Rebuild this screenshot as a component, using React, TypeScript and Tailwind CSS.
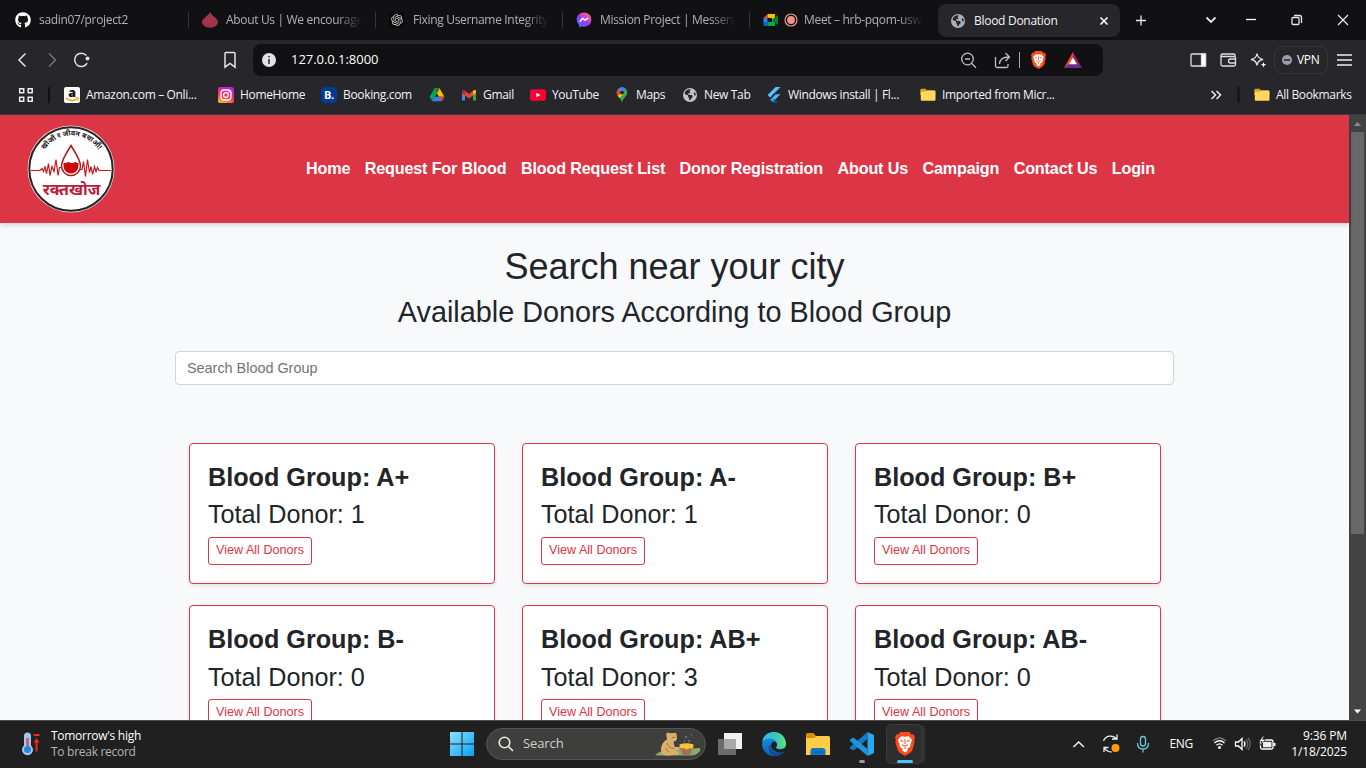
import React from "react";
import { FaGithub, FaEarthAmericas } from "react-icons/fa6";
import { RiOpenaiFill } from "react-icons/ri";

type IconProps = { className?: string };

const tabs = [
  { title: "sadin07/project2", icon: "github" },
  { title: "About Us | We encourage", icon: "drop" },
  { title: "Fixing Username IntegrityE", icon: "openai" },
  { title: "Mission Project | Messeng", icon: "messenger" },
  { title: "Meet – hrb-pqom-usw", icon: "meet" },
];

const groups = [
  { name: "A+", total: 1 },
  { name: "A-", total: 1 },
  { name: "B+", total: 0 },
  { name: "B-", total: 0 },
  { name: "AB+", total: 3 },
  { name: "AB-", total: 0 },
];

const links = ["Home", "Request For Blood", "Blood Request List", "Donor Registration", "About Us", "Campaign", "Contact Us", "Login"];

function Drop() {
  return (
    <svg viewBox="0 0 16 16" className="size-4">
      <path d="M8 0C6 4 0 6.500 0 10c0 3 3.500 5.700 8 5.700s8-2.700 8-5.700C16 6.500 10 4 8 0Z" fill="#9d3648" />
    </svg>
  );
}

function Messenger() {
  return (
    <svg viewBox="0 0 16 16" className="size-4">
      <defs>
        <linearGradient id="msg" x1="0" y1="1" x2=".8" y2="0">
          <stop offset="0" stopColor="#168aff" />
          <stop offset=".5" stopColor="#a033ff" />
          <stop offset="1" stopColor="#ff6b6b" />
        </linearGradient>
      </defs>
      <path d="M8 .5C3.700.5.7 3.600.7 7.600c0 2.200.9 4 2.400 5.300l.1 2.500 2.200-1c.8.200 1.700.400 2.600.400 4.300 0 7.300-3.100 7.300-7.200S12.300.5 8 .5Z" fill="url(#msg)" />
      <path d="m3.800 9.700 2.800-3.400 2.500 1.900 3.200-2.200" fill="none" stroke="#fff" strokeWidth="1.500" strokeLinejoin="round" />
    </svg>
  );
}

function Meet() {
  return (
    <svg viewBox="0 0 16 16" className="size-4">
      <path d="M4.500 2v4H.5z" fill="#e94235" />
      <path d="M4.500 2h7.500v3.500L9 8V6H4.500z" fill="#fbbc04" />
      <path d="M.5 6h4v4h-4z" fill="#2684fc" />
      <path d="M.5 10h4v4H2Q.5 14 .5 12.500z" fill="#0066da" />
      <path d="M4.500 10H9V8l3 2.500V14H4.500z" fill="#00ac47" />
      <path d="M9 8l6-5v10z" fill="#00832d" />
    </svg>
  );
}

function BraveLion({ className }: IconProps) {
  return (
    <svg viewBox="0 0 20 24" className={className}>
      <path d="m5.500 0h9l2 2.400 2-.2L20 5.500 19 8l.7 2-2.500 8.500-1.500 2L10 24l-5.700-3.500-1.500-2L.3 10 1 8 0 5.500l1.500-3.300 2 .2z" fill="#fb4a1c" />
      <path d="m6.300 4.200 3.700.6 3.700-.6 3.300 3.600-1.200 3.700L15 15l-2.600 1.800.4 1.700L10 20.500l-2.800-2 .4-1.700L5 15l-.8-3.500L3 7.800z" fill="#fff" />
      <path d="m5.300 8.500 3 .9M14.700 8.500l-3 .9M10 7v5M7 12.700l3 1.300 3-1.300M10 14.500V17" fill="none" stroke="#fb4a1c" strokeWidth="1" />
    </svg>
  );
}

function Folder() {
  return (
    <svg viewBox="0 0 16 16" className="size-4">
      <path d="M.3 3q0-1.200 1.200-1.200h4L7 3.500h7q1.200 0 1.200 1.200V8H.3z" fill="#d99e1c" />
      <path d="M.8 4.500H6L7.300 3.400H14.500q1 0 1 1V12.800q0 1-1 1H1.800q-1 0-1-1z" fill="#ffd75e" />
    </svg>
  );
}

function Insta() {
  return (
    <svg viewBox="0 0 16 16" className="size-4">
      <defs>
        <linearGradient id="ig" x1=".2" y1="1" x2=".6" y2="0">
          <stop offset="0" stopColor="#ffb52b" />
          <stop offset=".45" stopColor="#ff2f5e" />
          <stop offset="1" stopColor="#b520ea" />
        </linearGradient>
      </defs>
      <rect width="16" height="16" rx="2" fill="url(#ig)" />
      <rect x="3" y="3" width="10" height="10" rx="3" fill="none" stroke="#fff" strokeWidth="1.300" />
      <circle cx="8" cy="8" r="2.400" fill="none" stroke="#fff" strokeWidth="1.300" />
      <circle cx="11" cy="5" r=".8" fill="#fff" />
    </svg>
  );
}

function Drive() {
  return (
    <svg viewBox="0 0 16 16" className="size-4">
      <path d="M5.300 1.500 8 6.200 3.300 14.300.6 9.700z" fill="#00a94b" />
      <path d="M5.300 1.500h5.400l4.700 8.200H10z" fill="#ffbd00" />
      <path d="M5.900 9.700h9.500l-2.700 4.600H3.300z" fill="#3e7de9" />
      <path d="M5.300 1.500h5.400L8 6.200z" fill="#15803d" />
      <path d="m15.400 9.700-2.700 4.600L10 9.700z" fill="#ea4335" />
    </svg>
  );
}

function Gmail() {
  return (
    <svg viewBox="0 0 16 16" className="size-4">
      <path d="M1 4v9.500h3V6z" fill="#4285f4" />
      <path d="M15 4v9.500h-3V6z" fill="#34a853" />
      <path d="M1 4.500Q1 2.500 3 3l5 3.900L13 3q2-.5 2 1.500v1.800L8 11.500 1 6.300z" fill="#ea4335" />
      <path d="M12 4v4.100l3-2.200V4.500C15 2.400 13 2.800 12 4z" fill="#fbbc04" />
      <path d="M4 4v4.100L1 5.900V4.500C1 2.400 3 2.800 4 4z" fill="#c5221f" />
    </svg>
  );
}

function YouTube() {
  return (
    <svg viewBox="0 0 16 16" className="size-4">
      <rect y="2.300" width="16" height="11.400" rx="2.500" fill="#ff0033" />
      <path d="m6.300 5.700 4.200 2.300-4.200 2.300z" fill="#fff" />
    </svg>
  );
}

function MapsPin() {
  return (
    <svg viewBox="0 0 16 16" className="size-4">
      <path d="M8 .3A5.300 5.300 0 0 0 2.700 5.600C2.700 9.500 7 10.500 8 15.700 9 10.500 13.300 9.500 13.300 5.600A5.300 5.300 0 0 0 8 .3" fill="#34a853" />
      <path d="M8 .3A5.300 5.300 0 0 0 4 2.200L8 5.600 11.500 1.600A5.300 5.300 0 0 0 8 .3" fill="#4285f4" />
      <path d="M4 2.200A5.300 5.300 0 0 0 3.800 8.900L8 5.600z" fill="#ea4335" />
      <path d="M3.700 8.800 8 5.600l1.500 1.800L5.300 11z" fill="#fbbc04" />
      <circle cx="8" cy="5.600" r="1.900" fill="#26262b" />
    </svg>
  );
}

function TabIcon({ name }: { name: string }) {
  if (name === "github") return <FaGithub className="size-4 text-white" />;
  if (name === "drop") return <Drop />;
  if (name === "openai")
    return (
      <span className="flex size-4 shrink-0 items-center justify-center rounded-sm bg-[#0a0a0a]">
        <RiOpenaiFill className="size-[14px] text-[#d0d0d0]" />
      </span>
    );
  if (name === "messenger") return <Messenger />;
  return (
    <span className="flex shrink-0 gap-1">
      <Meet />
      <svg viewBox="0 0 16 16" className="size-4">
        <circle cx="8" cy="8" r="6" fill="none" stroke="#ee938b" strokeWidth="1.200" />
        <circle cx="8" cy="8" r="3.900" fill="#ee938b" />
      </svg>
    </span>
  );
}

function TabBar() {
  return (
    <div className="flex h-10 pl-px text-[12px] text-[#b1b1b4]">
      {tabs.map((t, i) => (
        <div key={t.title} className="flex h-10 w-[187px] shrink-0 items-center">
          <div className="ml-[14px] flex w-[160px] shrink-0 items-center gap-2 whitespace-nowrap [&>svg]:shrink-0 [mask-image:linear-gradient(to_right,#000_84%,transparent)]">
            <TabIcon name={t.icon} />
            <span className={i === 4 ? "-ml-[3px] tracking-[-0.32px]" : "tracking-[-0.33px]"}>{t.title}</span>
          </div>
          {i < 4 && <div className="ml-[13px] h-4 w-px shrink-0 bg-[#37373a]" />}
        </div>
      ))}
      <div className="ml-[2px] mt-1 flex h-[33px] w-[182px] shrink-0 items-center rounded-lg bg-[#26262b] pl-[13px] pr-[11px] text-[#f4f4f5]">
        <FaEarthAmericas className="size-[14px] text-[#aaafb5]" />
        <span className="ml-[9px] tracking-[-0.28px]">Blood Donation</span>
        <svg viewBox="0 0 10 10" className="ml-auto size-[10px]"><path d="m1.500 1.500 7 7m0-7-7 7" stroke="#fff" strokeWidth="1.600" /></svg>
      </div>
      <svg viewBox="0 0 246 40" className="h-10 w-[246px]" fill="none" stroke="#e8e8e8" strokeWidth="1.300">
        <path d="M16 20.500h10M21 15.500v10" />
        <path d="m86.500 17.500 4.500 4.500 4.500-4.500" strokeWidth="1.800" />
        <path d="M126 19.500h10" stroke="#fff" />
        <rect x="172" y="17.500" width="7" height="7" rx="1" />
        <path d="M174 15.500h5.500q2 0 2 2V23" />
        <path d="m218 15 10 10m0-10-10 10" />
      </svg>
    </div>
  );
}

function AddressBar() {
  return (
    <div className="flex h-10 items-center bg-[#26262b] text-[12px] text-white">
      <svg viewBox="0 0 253 40" className="h-10 w-[253px] shrink-0" fill="none" stroke="#e4e4e6" strokeWidth="1.500">
        <path d="m25.500 13.500-6.500 6.500 6.500 6.500" />
        <path d="m49 13.500 6.500 6.500-6.500 6.500" stroke="#77777b" />
        <path d="M87.200 23.200a6.700 6.700 0 1 1-.8-7.800" />
        <circle cx="87.500" cy="18.500" r="2" fill="#e4e4e6" stroke="none" />
        <path d="M225 13.500q0-1 1-1h8q1 0 1 1v13.700l-5-3.700-5 3.700z" />
      </svg>
      <div className="flex h-8 w-[850px] shrink-0 items-center rounded-lg bg-[#111113] pl-[9px]">
        <svg viewBox="0 0 14 14" className="size-[14px]">
          <circle cx="7" cy="7" r="7" fill="#e2e2e4" />
          <path d="M6.200 3h1.600v1.600H6.200zM6.200 6h1.600v5H6.200z" fill="#333" />
        </svg>
        <span className="ml-[15px] text-[13px] tracking-[-0.04px]">127.0.0.1:8000</span>
        <svg viewBox="0 0 60 32" className="ml-auto h-8 w-[60px]" fill="none" stroke="#bfbfc2" strokeWidth="1.300">
          <circle cx="8.500" cy="15" r="5.800" />
          <path d="m12.500 19.300 4.500 4.500M6 15h5" />
          <path d="M36.500 13v9q0 1.500 1.500 1.500h9.500q1.500 0 1.500-1.500v-2" />
          <path d="M40.500 20q.5-7 9-7M46.500 9l4 4-4 4" />
        </svg>
        <div className="h-4 w-px bg-[#aaa]" />
        <BraveLion className="ml-[10px] h-[18px] w-[17px]" />
        <svg viewBox="0 0 18 16" className="ml-[17px] mr-[21px] h-4 w-[18px]">
          <path d="M9 0 0 16l9-6z" fill="#ff4724" />
          <path d="m9 0 9 16-9-6z" fill="#9e1f63" />
          <path d="M0 16h18l-5-4H5z" fill="#662d91" />
          <path d="m9 5.500 4 6.800H5z" fill="#fff" />
        </svg>
      </div>
      <svg viewBox="0 0 172 40" className="h-10 w-[172px] shrink-0" fill="none" stroke="#e0e0e2" strokeWidth="1.300">
        <rect x="88" y="14" width="14.500" height="12" rx="1" />
        <path d="M98.500 14h4v12h-4z" fill="#fff" />
        <path d="M132 16.500V15q0-1-1-1h-11.500q-1.500 0-1.500 1.500v9q0 1.500 1.500 1.500H131q1.500 0 1.500-1.500V18q0-1.500-1.500-1.500H118" />
        <path d="M132.500 19h-5q-2 0-2 2t2 2h5" />
        <path d="M154 13.500q.7 5.300 6 6-5.300.7-6 6-.7-5.300-6-6 5.300-.7 6-6z" />
        <path d="m160.500 22 .8 2 2 .8-2 .8-.8 2-.8-2-2-.8 2-.8z" fill="#fff" stroke="none" />
      </svg>
      <div className="-ml-px flex h-7 w-[54px] shrink-0 items-center gap-[5px] rounded-lg border border-[#35353b] pl-[7px] text-[12px]">
        <svg viewBox="0 0 10 10" className="size-[10px] shrink-0"><circle cx="5" cy="5" r="5" fill="#9a9cb0" /><path d="M2 5h6" stroke="#26262b" strokeWidth="1.500" /></svg>
        <span className="tracking-[-0.3px]">VPN</span>
      </div>
      <svg viewBox="0 0 15 12" className="ml-[9px] h-3 w-[15px]" stroke="#eee" strokeWidth="1.300"><path d="M0 1h15M0 6h15M0 11h15" /></svg>
    </div>
  );
}

function Bookmark({ width, label, children }: { width: string; label?: string; children: React.ReactNode }) {
  return (
    <div className={`flex shrink-0 items-center gap-1.5 whitespace-nowrap tracking-[-0.34px] ${width}`}>
      <span className="flex size-4 shrink-0 items-center justify-center">{children}</span>
      {label}
    </div>
  );
}

function Bookmarks() {
  return (
    <div className="flex h-[35px] items-center border-b border-[#3a3a3e] bg-[#26262b] pb-1 text-[12px] text-[#f3f3f4]">
      <svg viewBox="0 0 64 30" className="h-[30px] w-16 shrink-0" fill="none" stroke="#eee" strokeWidth="1.500">
        <path d="M19.700 8.700h4v4h-4zM28.200 8.700h4v4h-4zM19.700 17.200h4v4h-4zM28.200 17.200h4v4h-4z" />
        <path d="M49 7v16" stroke="#111" strokeWidth="2" />
      </svg>
      <Bookmark width="w-[154px]" label="Amazon.com – Onli...">
        <svg viewBox="0 0 16 16" className="size-4">
          <rect width="16" height="16" rx="2" fill="#fff" />
          <text x="8" y="9.800" textAnchor="middle" fontFamily="Open Sans" fontWeight="800" fontSize="12.500" fill="#111">a</text>
          <path d="M2 11q6 4.500 11 1" fill="none" stroke="#ff9900" strokeWidth="1.500" />
          <path d="M11.500 10.700h3l-.6 3" fill="none" stroke="#ff9900" />
        </svg>
      </Bookmark>
      <Bookmark width="w-[103px]" label="HomeHome"><Insta /></Bookmark>
      <Bookmark width="w-[108px]" label="Booking.com">
        <span className="flex size-4 items-center justify-center rounded-sm bg-[#003b95] text-[11px] font-bold text-white">B.</span>
      </Bookmark>
      <Bookmark width="w-8"><Drive /></Bookmark>
      <Bookmark width="w-[69px]" label="Gmail"><Gmail /></Bookmark>
      <Bookmark width="w-[84px]" label="YouTube"><YouTube /></Bookmark>
      <Bookmark width="w-[68px]" label="Maps"><MapsPin /></Bookmark>
      <Bookmark width="w-[84px]" label="New Tab"><FaEarthAmericas className="size-[14px] text-[#c1c3c6]" /></Bookmark>
      <Bookmark width="w-[154px]" label="Windows install | Fl...">
        <svg viewBox="0 0 16 16" className="size-4">
          <path d="M9.700 0H14.500L4 10.400 1.600 8z" fill="#54c5f8" />
          <path d="M9.700 7.300h4.800L8.900 12.800 6.500 10.400z" fill="#40bdf5" />
          <path d="m4.100 12.700 2.400-2.400 2.400 2.400-2.400 2.400z" fill="#29a6e8" />
          <path d="m6.500 15.100 2.400-2.400 3.200 3.300H7.400z" fill="#01579b" />
        </svg>
      </Bookmark>
      <Bookmark width="w-[154px]" label="Imported from Micr..."><Folder /></Bookmark>
      <svg viewBox="0 0 44 30" className="ml-auto h-[30px] w-11 shrink-0" fill="none" stroke="#eee" strokeWidth="1.500">
        <path d="m1.500 11 4 4-4 4m5-8 4 4-4 4" />
        <path d="M28.500 7v16" stroke="#111" strokeWidth="2" />
      </svg>
      <Bookmark width="w-[112px]" label="All Bookmarks"><Folder /></Bookmark>
    </div>
  );
}

function Logo() {
  return (
    <svg viewBox="0 0 88 88" className="ml-[27px] size-[88px] shrink-0">
      <defs><path id="arc" d="M14 32A32.400 32.400 0 0 1 75 32" /></defs>
      <circle cx="44" cy="44" r="43.500" fill="#e9dcdc" />
      <circle cx="44" cy="44" r="41.700" fill="#fff" stroke="#262626" strokeWidth="2" />
      <text fontSize="7.200" fontWeight="700" fill="#222" fontFamily="Noto Sans, Noto Sans Devanagari, sans-serif">
        <textPath href="#arc" startOffset="50%" textAnchor="middle">खोजौं र जीवन बचाऔं!</textPath>
      </text>
      <path d="M4 45.500h9l2-2 1.500 3 1.500-5 1.500 7 2-10 1.500 12 2-9 2 5 2-12 2 16 1.500-8h2M53 44.500h2l1.500-8 2 15 2-17 2 13 1.500-6 1.500 8 2-8 1.500 5 1.500-4 1.500 3h12" fill="none" stroke="#c51a1e" strokeWidth="1.200" />
      <path d="M44 20.500C39 29 34.500 35 34.500 41a9.500 9.500 0 0 0 19 0C53.500 35 49 29 44 20.500z" fill="#fff" stroke="#a32020" strokeWidth="1.500" />
      <path d="M36.500 38h3q2-2 4 0h3q2-2 3.500 0h1.500v3a7.500 7.500 0 0 1-15 0z" fill="#ce0909" />
      <text x="44.500" y="69.500" textAnchor="middle" fontSize="16" fontWeight="700" fill="#b9203c" fontFamily="Noto Sans, Noto Sans Devanagari, sans-serif">रक्तखोज</text>
    </svg>
  );
}

function DonorCard({ name, total }: { name: string; total: number }) {
  return (
    <div className="h-[141px] rounded-[4px] border border-[#dc3545] bg-white py-[18px] pl-[18.5px] pr-[18px] shadow-[0_2px_4px_rgba(0,0,0,0.08)]">
      <h3 className="mb-[7px] text-[25.2px] font-bold leading-[30.24px]">Blood Group: {name}</h3>
      <h3 className="mb-[7px] text-[25.2px] leading-[30.4px]">Total Donor: {total}</h3>
      <button className="-ml-[0.5px] flex h-7 w-[104px] justify-center whitespace-nowrap rounded-[3px] border border-[#dc3545] pl-px pt-[3px] text-[12.6px] leading-[18.9px] text-[#dc3545]">View All Donors</button>
    </div>
  );
}

function Page() {
  return (
    <div className="flex h-[605px] overflow-hidden">
      <main className="w-[1349px] shrink-0 bg-[#f8f9fb] font-['Liberation_Sans',Arial,sans-serif] text-[#212529]">
        <header className="relative flex h-[108px] items-center bg-[#dc3545] shadow-[0_2px_5px_rgba(0,0,0,0.16)]">
          <Logo />
          <nav className="ml-[191px] flex gap-[14.4px] whitespace-nowrap pb-[2px] text-[16.2px] font-bold tracking-[-0.175px] text-white">
            {links.map((l) => <a key={l}>{l}</a>)}
          </nav>
        </header>
        <h1 className="mt-[22px] text-center text-[36px] leading-[43.2px]">Search near your city</h1>
        <h2 className="mt-[7px] text-center text-[28.8px] leading-[34.6px]">Available Donors According to Blood Group</h2>
        <div className="mx-auto mt-[21.2px] flex h-[34px] w-[999px] items-center rounded-[4px] border border-[#ced4da] bg-white pl-[11px] pt-px text-[14.4px] text-[#6c757d]">Search Blood Group</div>
        <div className="mx-auto mt-[58px] grid w-[972px] grid-cols-3 gap-x-[27px] gap-y-[21.4px]">
          {groups.map((g) => <DonorCard key={g.name} {...g} />)}
        </div>
      </main>
      <div className="flex w-[17px] flex-col items-center bg-[#424242]">
        <svg viewBox="0 0 17 17" className="size-[17px]"><path d="m5 11 3.500-4 3.500 4z" fill="#8a8a8a" /></svg>
        <div className="h-[402px] w-[13px] bg-[#686868]" />
        <svg viewBox="0 0 17 17" className="mt-auto size-[17px]"><path d="M5 6.500h7l-3.500 4z" fill="#fff" /></svg>
      </div>
    </div>
  );
}

function Bear() {
  return (
    <svg viewBox="0 0 46 28" className="h-7 w-[46px]">
      <path d="M0 25q8-7 23-6l22-1q1 3-2 5-2 2-7 2.500H6q-5 0-6-.5z" fill="#8fa869" />
      <path d="M6.500 23.500C5 18 7 12 12 9.500L11.500 6Q10.500 3 13 2.500l2 .8 4-.3q2.500-.8 2.500 1.200l.5 4.500q-.5 2.500-3.500 3l1 5 5.500.5-.3 2-4.700 1.300 4 2-.5 2-6 .5q-8 1.500-11.500-1.500z" fill="#dcae6c" />
      <path d="M12 13q1.500 5 7 5.500M17 7.500h3M14 22q-3-1.500-3-4" fill="none" stroke="#a0713a" strokeWidth="1" />
      <path d="M26 18h11l-1 6q-4.500 2-9 0z" fill="#a0704f" />
      <path d="M24.500 14.500q7-2.500 14 0v2.500q-2 3-4 1-3 3-5 0-4 1.500-5-1z" fill="#f8c437" />
      <path d="M30 7h2M33 11h2M36 5h1M29 11h1" stroke="#728093" strokeWidth="1.300" />
    </svg>
  );
}

function Taskbar() {
  return (
    <footer className="flex h-12 items-center border-t border-[#4a4d4a] bg-[#202020] pb-px text-[12px] text-white">
      <svg viewBox="0 0 20 24" className="ml-[21px] h-6 w-5 shrink-0">
        <path d="M3 4a3.500 3.500 0 0 1 7 0v9.500a5.500 5.500 0 1 1-7 0z" fill="#9bcaf2" />
        <circle cx="6.500" cy="17.500" r="3.500" fill="#2489d8" />
        <path d="M6.500 6v8" stroke="#e44556" strokeWidth="2.400" />
        <path d="M12.500 3h6" stroke="#f5271d" strokeWidth="2" />
        <path d="m15.500 6 3 4.500h-2v9h-2v-9h-2z" fill="#f5271d" />
      </svg>
      <div className="ml-[10px] w-[397px] shrink-0 leading-4 tracking-[-0.28px]">
        <div>Tomorrow's high</div>
        <div className="text-[#b4b4b4]">To break record</div>
      </div>
      <svg viewBox="0 0 24 24" className="ml-[2px] size-6 shrink-0">
        <defs><linearGradient id="win" x2="1" y2="1"><stop stopColor="#8be0ff" /><stop offset="1" stopColor="#08a0f8" /></linearGradient></defs>
        <path d="M0 0h11.500v11.500H0zM12.500 0H24v11.500H12.500zM0 12.500h11.500V24H0zM12.500 12.500H24V24H12.500z" fill="url(#win)" />
      </svg>
      <div className="ml-3 flex h-8 w-[220px] shrink-0 items-center rounded-full border border-[#555550] bg-[#3e3e3c] pl-[11px] pr-[4px] text-[13px] text-[#d0d0d0]">
        <svg viewBox="0 0 16 16" className="size-4" fill="none" stroke="#e8e8e8" strokeWidth="1.600"><circle cx="6.500" cy="6.500" r="5.300" /><path d="m10.500 10.500 4.500 4.500" /></svg>
        <span className="ml-[9px] mr-auto tracking-[-0.1px]">Search</span>
        <Bear />
      </div>
      <svg viewBox="0 0 24 22" className="ml-3 h-[22px] w-6 shrink-0">
        <rect x="6" width="18" height="16" fill="#f1f1f1" /><rect y="6" width="18" height="16" fill="#6b6b6b" /><path d="M6 6h12v10H6z" fill="#a8a8a8" />
      </svg>
      <svg viewBox="0 0 24 24" className="ml-5 size-6 shrink-0">
        <defs>
          <linearGradient id="e1" x2="1"><stop stopColor="#2fb9e9" /><stop offset=".6" stopColor="#38c8bd" /><stop offset="1" stopColor="#6be35c" /></linearGradient>
          <linearGradient id="e2" y2="1" x2="0"><stop stopColor="#1f9ce6" /><stop offset="1" stopColor="#0d5fb8" /></linearGradient>
        </defs>
        <circle cx="12" cy="12" r="12" fill="url(#e2)" />
        <path d="M9 11.500c-3 6 3 11 11 8.500q1.500-.7 2-.2c-1 2-4 4.200-8.500 4.200C6 23 5 14 9 11.500z" fill="#124a94" />
        <path d="M12 9.500c2 0 3.200 1.500 3 3.500-.3 2-1.500 2.500-.3 3.500 2.800 1.600 6.500 1 9.300-1L22.500 19.500c-6 2.500-13.500-.5-13.500-5.500 0-2.500 1.300-4.500 3-4.500z" fill="#202124" />
        <path d="M.3 10C2-3.500 22-3.500 24 11c.5 5-4.500 7-9 5.500-2-.8.3-1.500.2-4C15 6 4 4 .3 10z" fill="url(#e1)" />
      </svg>
      <svg viewBox="0 0 24 22" className="ml-5 h-[22px] w-6 shrink-0">
        <path d="M0 1.500Q0 0 1.500 0h6L10 3v3H0z" fill="#d99000" />
        <path d="M0 5h8l2.500-2H22.500Q24 3 24 4.500V22H0z" fill="#ffcd48" />
        <path d="M4.500 22v-4q0-3 3-3h9q3 0 3 3v4z" fill="#0b78cb" /><path d="M8 19h8" stroke="#084b88" />
      </svg>
      <div className="ml-5 flex h-full w-6 shrink-0 flex-col items-center pt-[11px]">
        <svg viewBox="0 0 24 24" className="size-6 shrink-0">
          <path d="M17.500 0 24 3v18l-6.500 3z" fill="#29a8f2" />
          <path d="M17.500 0v7L3.500 18.500 0 16.500V15z" fill="#147ac4" />
          <path d="M17.500 24v-7L3.500 5.500 0 7.500V9z" fill="#2193dd" />
        </svg>
        <div className="mt-[4px] h-[3px] w-[6px] shrink-0 rounded-full bg-[#999]" />
      </div>
      <div className="ml-3 flex h-10 w-[36px] shrink-0 flex-col items-center rounded-[5px] border border-[#3a3a3a] bg-[#2d2d2d] pl-[2px] pt-[7px] shadow-[4px_0_0_-1px_#333]">
        <BraveLion className="h-6 w-[20px] shrink-0" />
        <div className="mt-1 h-[3px] w-4 shrink-0 rounded-full bg-[#4cc2ff]" />
      </div>
      <svg viewBox="0 0 100 40" className="ml-auto h-10 w-[100px] shrink-0" fill="none" stroke="#eee" strokeWidth="1.300">
        <path d="m13.500 23 5.200-5 5.200 5" strokeWidth="1.600" />
        <path d="M43.500 17a7.500 7.500 0 0 1 13-2m.5-4.500V15h-5M44 28v-4.500h4.500M44.500 24q2.500 4 7 4" />
        <circle cx="55.500" cy="24" r="4" fill="#ff9c0a" stroke="none" />
        <rect x="80.500" y="12.500" width="5" height="9.500" rx="2.500" stroke="#6fc4dc" />
        <path d="M77.500 19q0 6 5.500 6t5.500-6M83 25v3.500" stroke="#6fc4dc" />
      </svg>
      <span className="ml-[9px] tracking-[-0.3px]">ENG</span>
      <svg viewBox="0 0 64 24" className="ml-[19px] h-6 w-16 shrink-0" fill="none" stroke="#fff" strokeWidth="1.300">
        <path d="M1 9q6.500-6 13 0" stroke="#777" /><path d="M2.500 11q5-4.500 10 0M4.500 13.300q3-2.800 6 0" /><circle cx="7.500" cy="15.500" r="1.500" fill="#fff" stroke="none" />
        <path d="M23.500 10h3l3.500-3.500v11L26.500 14h-3z" /><path d="M32 9.500q2 2.500 0 5" /><path d="M34 7.500q3.500 4.500 0 9M36 6q4.500 6 0 12" stroke="#666" />
        <rect x="48.500" y="8" width="12.500" height="9" rx="1.500" /><path d="M51 9.800h8.500v5.500H51z" fill="#eee" stroke="none" /><path d="M62.500 11v3" strokeWidth="2" />
        <path d="m51 4-4 5.500h3L47.500 14l6-6.500h-3L52 4z" fill="#fff" stroke="#202020" strokeWidth=".6" />
      </svg>
      <div className="ml-[9px] mr-[19px] w-[62px] whitespace-nowrap text-right leading-4 tracking-[-0.12px]"><div>9:36 PM</div><div>1/18/2025</div></div>
    </footer>
  );
}

export default function App() {
  return (
    <div className="h-[768px] w-[1366px] overflow-hidden bg-[#111113] font-['Open_Sans','Noto_Sans',sans-serif]">
      <TabBar />
      <AddressBar />
      <Bookmarks />
      <Page />
      <Taskbar />
    </div>
  );
}
